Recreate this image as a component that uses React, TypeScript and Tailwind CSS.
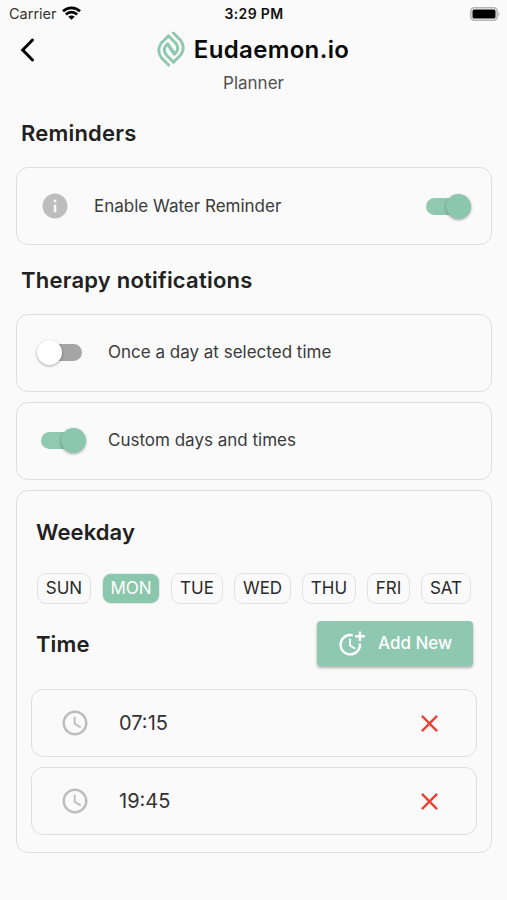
import React, { useState } from 'react';
import { MdAccessTime, MdClose, MdInfo, MdMoreTime } from 'react-icons/md';

const WEEKDAYS = [
  { label: 'SUN', width: 'w-[54px]' },
  { label: 'MON', width: 'w-[58px]' },
  { label: 'TUE', width: 'w-[52px]' },
  { label: 'WED', width: 'w-[57px]' },
  { label: 'THU', width: 'w-[54px]' },
  { label: 'FRI', width: 'w-[43px]' },
  { label: 'SAT', width: 'w-[50px]' },
];

function Logo() {
  return (
    <svg
      width="28"
      height="36"
      viewBox="0 0 28 36"
      fill="none"
      stroke="#8fc8b1"
      strokeWidth="2.9"
      strokeLinecap="round"
      strokeLinejoin="round"
    >
      <path d="M11.600 34 4.400 26.800Q-0.800 19 4.300 12L11.500 4.900 18.600 12Q22.400 16.500 19.400 21L17.300 23.200 10.700 13.600" />
      <path d="M16.400 2 23.600 9.200Q28.800 17 23.700 24L16.500 31.100 9.400 24Q5.600 19.500 8.600 15L10.700 12.800 17.300 22.400" />
    </svg>
  );
}

function StatusBar() {
  return (
    <div className="grid h-7 grid-cols-3 items-center pl-[9px] pr-[6px]">
      <div className="flex items-center gap-[6px] text-[14.5px] text-[#333]">
        Carrier
        <svg className="-ml-px -mt-[2px]" width="19" height="14" viewBox="0 0 19 14" fill="none" stroke="#000" strokeWidth="2.700">
          <path d="M1 5.300a12.200 12.200 0 0 1 17 0M3.900 8.500a8 8 0 0 1 11.200 0" />
          <path d="M9.500 13.800 6.300 10.700a4.600 4.600 0 0 1 6.400 0Z" fill="#000" stroke="none" />
        </svg>
      </div>
      <div className="-ml-[2px] -mt-px text-center text-[14px] font-semibold tracking-[0.35px] text-[#111]">3:29 PM</div>
      <svg className="-mt-px justify-self-end" width="31" height="14" viewBox="0 0 31 14">
        <rect x="0.800" y="0.800" width="26.400" height="12.400" rx="3.500" fill="#fafafa" stroke="#b4b4b4" strokeWidth="1.600" />
        <rect x="2.500" y="2.500" width="23" height="9" rx="1.500" fill="#000" />
        <path d="M28.500 4.500q2.200 2.500 0 5z" fill="#b4b4b4" />
      </svg>
    </div>
  );
}

interface ToggleProps {
  checked: boolean;
  onChange: () => void;
}

function Toggle({ checked, onChange }: ToggleProps) {
  return (
    <button
      role="switch"
      aria-checked={checked}
      onClick={onChange}
      className={`flex h-[17px] w-[41px] shrink-0 items-center rounded-full ${
        checked ? 'justify-end bg-[#8fc9b0]' : 'justify-start bg-[#a5a5a5]'
      }`}
    >
      <span
        className={`size-[25px] shrink-0 rounded-full shadow-[0_1px_3px_rgba(0,0,0,0.35)] ${
          checked ? '-mr-1 bg-[#8bc7ad]' : '-ml-1 bg-white'
        }`}
      />
    </button>
  );
}

function TimeRow({ time, onRemove }: { time: string; onRemove: () => void }) {
  return (
    <div className="flex h-[68px] items-center rounded-xl border border-[#dedede] pl-[28px] pr-[32px]">
      <MdAccessTime className="size-[30px] text-[#bdbdbd]" />
      <span className="ml-[29px] flex-1 text-[20px] text-[#333]">{time}</span>
      <button onClick={onRemove}>
        <MdClose className="size-[29px] text-[#ea4335]" />
      </button>
    </div>
  );
}

export default function App() {
  const [water, setWater] = useState(true);
  const [daily, setDaily] = useState(false);
  const [selectedDay, setSelectedDay] = useState('MON');
  const [times, setTimes] = useState(['07:15', '19:45']);

  const removeTime = (time: string) => setTimes((prev) => prev.filter((t) => t !== time));

  return (
    <div className="h-[900px] w-[507px] overflow-hidden bg-[#fafafa] font-['Inter',sans-serif] whitespace-nowrap text-[#212121]">
      <StatusBar />

      <header className="grid h-[70px] grid-cols-[60px_1fr_60px]">
        <button className="flex h-11 items-center pl-5">
          <svg width="16" height="26" viewBox="0 0 16 26" fill="none" stroke="#000" strokeWidth="3" strokeLinecap="round">
            <path d="M12.500 3 2.700 13l9.800 10" />
          </svg>
        </button>
        <div className="flex flex-col items-center">
          <div className="-ml-px flex h-[42px] items-center gap-[9px]">
            <Logo />
            <h1 className="pt-px text-[24px] font-semibold tracking-[0.35px] text-[#0a0a0a]">Eudaemon.io</h1>
          </div>
          <p className="mt-px text-[17px] leading-6 text-[#505050]">Planner</p>
        </div>
      </header>

      <main className="px-[15px]">
        <h2 className="flex h-[69px] items-center pl-[6px] pt-[2px] text-[22px] font-[560] tracking-[0.2px]">Reminders</h2>
        <section className="ml-px flex h-[78px] items-center rounded-xl border border-[#dedede] pl-[23px] pr-[24px]">
          <MdInfo className="size-[30px] text-[#bdbdbd]" />
          <span className="ml-[24px] flex-1 pt-px text-[17px] text-[#3a3a3a]">Enable Water Reminder</span>
          <Toggle checked={water} onChange={() => setWater(!water)} />
        </section>

        <h2 className="flex h-[69px] items-center pl-[6px] pt-[2px] text-[22px] font-[560] tracking-[0.22px]">
          Therapy notifications
        </h2>
        <div className="ml-px flex flex-col gap-[10px]">
          <section className="flex h-[78px] items-center rounded-xl border border-[#dedede] pb-px pl-[24px]">
            <Toggle checked={daily} onChange={() => setDaily(!daily)} />
            <span className="ml-[26px] pt-px text-[17px] text-[#3a3a3a]">Once a day at selected time</span>
          </section>
          <section className="flex h-[78px] items-center rounded-xl border border-[#dedede] pb-px pl-[24px]">
            <Toggle checked={!daily} onChange={() => setDaily(!daily)} />
            <span className="ml-[26px] pt-px text-[17px] text-[#3a3a3a]">Custom days and times</span>
          </section>

          <section className="h-[363px] rounded-xl border border-[#dedede] px-[14px]">
            <h2 className="flex h-[82px] items-center pl-[5px] text-[22px] font-[560] tracking-[0.1px]">Weekday</h2>
            <div className="flex justify-between pl-[6px] pr-[6px]">
              {WEEKDAYS.map(({ label, width }) => (
                <button
                  key={label}
                  onClick={() => setSelectedDay(label)}
                  className={`h-[31px] rounded-[9px] border text-[17px] ${width} ${
                    selectedDay === label
                      ? 'border-[#dfeee8] bg-[#8bc7ad] text-white'
                      : 'border-[#e2e2e2] text-[#2a2a2a]'
                  }`}
                >
                  {label}
                </button>
              ))}
            </div>

            <div className="mt-[17px] flex h-[45px] items-center justify-between pl-[5px] pr-[4px]">
              <h2 className="pt-px text-[22px] font-[560] tracking-[0.1px]">Time</h2>
              <button
                onClick={() => setTimes((prev) => [...prev, '12:00'])}
                className="flex h-[45px] w-[156px] items-center rounded-[4px] bg-[#8fc8b0] pl-[20px] text-[17px] font-[540] text-white shadow-[0_2px_3px_rgba(0,0,0,0.3)]"
              >
                <MdMoreTime className="size-[29px]" />
                <span className="ml-[12px] pt-px">Add New</span>
              </button>
            </div>

            <div className="mt-[23px] flex flex-col gap-[10px]">
              {times.map((time) => (
                <TimeRow key={time} time={time} onRemove={() => removeTime(time)} />
              ))}
            </div>
          </section>
        </div>
      </main>
    </div>
  );
}
